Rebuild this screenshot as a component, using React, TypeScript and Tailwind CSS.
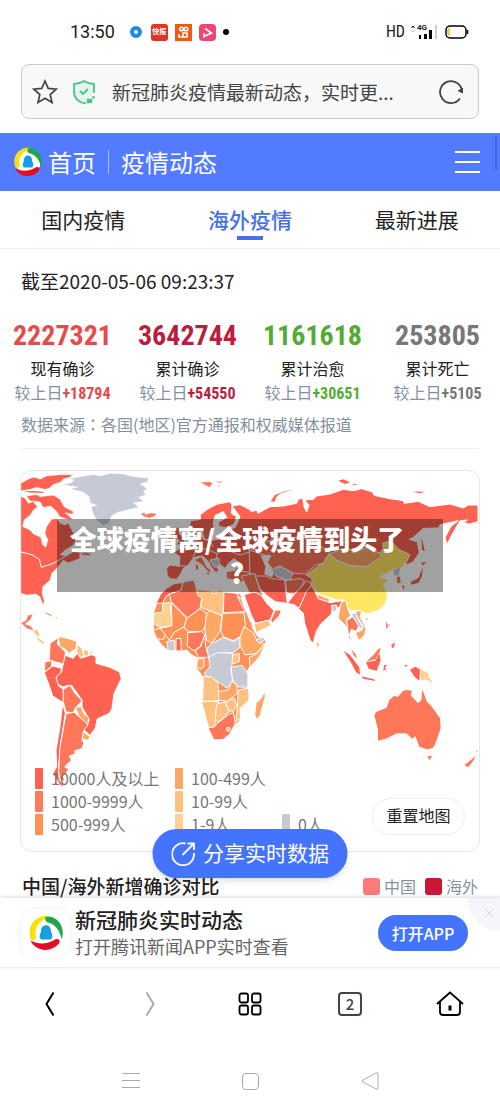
import React, { useState } from 'react';
import { X } from 'lucide-react';

const stats = [
  { value: '2227321', label: '现有确诊', diff: '+18794', color: 'text-[#e64b4b]' },
  { value: '3642744', label: '累计确诊', diff: '+54550', color: 'text-[#b81f3f]' },
  { value: '1161618', label: '累计治愈', diff: '+30651', color: 'text-[#53ab35]' },
  { value: '253805', label: '累计死亡', diff: '+5105', color: 'text-[#777777]' },
];

const legend = [
  { label: '10000人及以上', color: 'bg-[#ff6050]' },
  { label: '100-499人', color: 'bg-[#ffa566]' },
  { label: '', color: '' },
  { label: '1000-9999人', color: 'bg-[#ff7a5a]' },
  { label: '10-99人', color: 'bg-[#ffc080]' },
  { label: '', color: '' },
  { label: '500-999人', color: 'bg-[#ff9056]' },
  { label: '1-9人', color: 'bg-[#ffd193]' },
  { label: '0人', color: 'bg-[#c5cad5]' },
];

const RED = '#ff6250';
const CORAL = '#ff7759';
const ORANGE = '#ff9056';
const AMBER = '#ffa866';
const SAND = '#ffc080';
const PALE = '#ffd193';
const GREY = '#c5cad5';

interface Region {
  fill: string;
  d: string;
}

const northWest: Region[] = [
  { fill: RED, d: 'M33 70L60 55 75 52 90 58 110 48 150 44 187 44 180 52 160 56 152 66 130 73 118 84 105 88 80 82 60 88 33 92ZM38 94L70 92 103 95 100 99 60 98ZM50 108L80 104 90 110 130 106 150 118 162 140 190 155 187 162 165 158 188 178 172 178 150 170 138 152 122 138 100 142 90 125 60 122Z' },
  { fill: RED, d: 'M33 110L45 115 55 130 70 125 82 140 70 150 60 165 42 180 38 200 60 210 70 222 92 232 98 255 108 262 114 240 105 220 110 200 125 178 140 176 150 190 165 195 175 190 185 210 200 235 190 255 165 270 150 285 170 288 190 275 210 278 208 296 175 308 160 300 140 325 125 340 120 360 98 380 96 400 103 425 98 433 90 410 78 402 50 405 33 400Z' },
  { fill: CORAL, d: 'M33 488L48 482 54 466 68 463 62 478 45 492 62 498 72 512 50 505ZM98 454L120 462 131 471 114 464ZM215 279L232 278 243 281 238 287 214 284Z' },
  { fill: SAND, d: 'M70 514L82 508 88 524 84 530ZM78 530L90 538 104 549 99 552 84 541ZM132 472L146 473 139 477ZM152 475L158 479 152 480Z' },
  { fill: GREY, d: 'M158 74L184 68 192 60 180 56 212 50 250 44 274 48 300 40 340 42 370 50 415 54 412 65 390 72 410 85 400 95 408 104 385 112 402 124 370 128 386 142 350 150 320 158 305 168 296 190 278 196 258 178 247 154 244 140 262 136 240 128 238 110 218 95 180 87 204 81Z' },
  { fill: CORAL, d: 'M392 160L405 158 406 164 420 159 438 160 436 168 418 174 402 170ZM570 67L600 65 608 71 598 82 585 75ZM615 65L640 64 630 69ZM622 77L630 76 626 80Z' },
];

const europe: Region[] = [
  { fill: RED, d: 'M540 225L538 200 543 182 572 178 570 165 592 148 620 133 660 125 666 136 664 160 680 170 672 192 650 203 628 200 624 188 650 172 640 155 616 166 610 185 612 198 600 215 596 238 584 240 576 215 558 228Z' },
  { fill: RED, d: 'M666 138L690 134 722 150 722 345 700 350 680 345 662 348 655 335 680 325 690 310 672 296 655 310 646 325 632 316 620 298 610 305 626 330 618 338 604 322 596 305 578 288 560 290 548 296 535 316 520 325 510 345 500 358 482 356 472 348 470 325 480 315 508 318 510 290 492 278 505 268 530 258 545 240 565 240 572 222 580 238 600 242 640 234 652 212 676 202 690 170Z' },
  { fill: RED, d: 'M490 206L508 200 508 220 524 238 524 252 497 256 508 242 494 230ZM472 232L488 222 492 240 476 250ZM558 308L566 320 562 336 556 325ZM584 338L600 336 596 346Z' },
  { fill: CORAL, d: 'M550 300L575 290 590 320 604 332 596 338 576 314ZM648 335L680 330 722 338 722 362 690 366 676 360 650 356Z' },
  { fill: GREY, d: 'M600 300L626 294 630 316 612 322Z' },
];

const africa: Region[] = [
  { fill: ORANGE, d: 'M440 430L470 388 500 368 552 358 562 388 600 392 640 400 690 400 705 430 722 470 728 505 745 532 765 530 768 545 755 580 720 620 704 645 715 670 717 720 690 745 690 780 670 800 660 825 640 838 612 840 600 805 580 740 578 700 578 650 560 625 565 595 545 585 530 570 500 576 475 572 455 555 430 520 430 460Z' },
  { fill: RED, d: 'M438 430L452 402 470 385 495 370 520 368 512 392 478 402 466 412 458 430Z' },
  { fill: CORAL, d: 'M484 425L478 402 512 392 520 366 552 360 562 400 575 415 570 445 532 474Z' },
  { fill: SAND, d: 'M562 388L600 392 612 402 628 390 642 396 638 468 600 452 572 442 576 416 562 404Z' },
  { fill: CORAL, d: 'M642 396L680 400 690 416 682 410 706 455 640 458Z' },
  { fill: PALE, d: 'M430 490L432 460 458 456 458 430 480 428 486 498 448 502Z' },
  { fill: ORANGE, d: 'M450 505L486 497 484 428 530 475 522 500 494 516 478 540 464 524Z' },
  { fill: ORANGE, d: 'M530 475L570 446 590 460 586 500 574 515 538 515 522 504Z' },
  { fill: AMBER, d: 'M590 460L600 452 636 468 630 514 605 550 590 540 584 508Z' },
  { fill: ORANGE, d: 'M638 460L702 458 706 495 690 530 670 542 640 530 632 512Z' },
  { fill: ORANGE, d: 'M430 510L450 505 466 524 460 538 440 536Z' },
  { fill: GREY, d: 'M606 550L640 532 672 545 690 532 690 562 672 577 625 580 596 592 590 566Z' },
  { fill: CORAL, d: 'M533 518L575 515 585 525 570 560 552 572 532 558Z' },
  { fill: CORAL, d: 'M585 522L586 555 596 592 566 592 556 572 572 560Z' },
  { fill: GREY, d: 'M470 545L492 540 496 572 475 572Z' },
  { fill: RED, d: 'M498 536L512 535 514 570 498 574Z' },
  { fill: GREY, d: 'M596 592L622 578 668 580 672 600 662 625 668 665 650 684 625 665 602 658 582 642 600 620Z' },
  { fill: AMBER, d: 'M702 500L730 518 740 540 762 552 740 580 705 585 690 556 690 532Z' },
  { fill: GREY, d: 'M738 540L764 531 764 540 748 550Z' },
  { fill: AMBER, d: 'M768 545L750 588 720 622 718 592 742 580Z' },
  { fill: SAND, d: 'M668 585L688 580 688 605 666 612Z' },
  { fill: GREY, d: 'M663 622L696 616 714 642 713 682 682 680 668 660Z' },
  { fill: AMBER, d: 'M562 598L582 594 582 620 570 628 560 618Z' },
  { fill: SAND, d: 'M580 650L604 650 624 668 626 722 578 724Z' },
  { fill: AMBER, d: 'M626 695L655 690 665 664 680 672 682 700 652 724 626 720Z' },
  { fill: SAND, d: 'M574 724L628 725 620 735 614 800 596 804Z' },
  { fill: SAND, d: 'M620 732L644 726 658 755 624 788 616 780Z' },
  { fill: SAND, d: 'M646 726L672 714 680 735 670 754 656 752Z' },
  { fill: SAND, d: 'M685 690L716 684 717 720 690 745 692 774 678 784 682 740Z' },
  { fill: CORAL, d: 'M594 804L614 800 625 788 655 764 670 758 676 790 660 820 640 838 612 840Z' },
  { fill: AMBER, d: 'M764 695L766 710 756 745 750 768 740 778 734 764 738 730 752 716Z' },
];

const southAmerica: Region[] = [
  { fill: CORAL, d: 'M120 10L145 -7 142 12 152 22 166 35 164 72 144 68 118 60Z' },
  { fill: AMBER, d: 'M145 -5L152 -10 180 -3 200 4 198 26 178 40 166 28 150 20Z' },
  { fill: SAND, d: 'M202 12L216 26 222 50 208 52 200 34ZM220 28L235 32 236 48 222 48Z' },
  { fill: GREY, d: 'M238 30L247 38 241 50Z' },
  { fill: CORAL, d: 'M105 65L126 62 124 80 103 96Z' },
  { fill: RED, d: 'M160 70L166 46 190 55 202 40 212 55 246 44 258 50 258 70 300 82 328 96 334 116 312 160 306 205 298 220 262 236 256 264 240 286 222 270 238 240 216 200 216 180 184 135 158 140 138 130 140 108 155 95Z' },
  { fill: RED, d: 'M103 98L128 78 155 85 152 98 138 112 146 138 160 148 160 188 128 168 116 132Z' },
  { fill: CORAL, d: 'M160 148L180 136 195 160 216 182 196 204 190 218 168 216 160 186Z' },
  { fill: AMBER, d: 'M196 204L212 198 222 222 236 232 234 252 216 246Z' },
  { fill: AMBER, d: 'M218 274L240 290 234 301 217 298Z' },
  { fill: RED, d: 'M158 190L166 220 152 310 146 380 148 420 164 438 152 438 128 402 140 380 138 330 150 260Z' },
  { fill: CORAL, d: 'M168 222L192 216 234 254 220 274 216 300 222 310 215 326 194 332 195 342 178 348 184 360 164 380 176 388 160 410 166 424 150 420 146 396 150 320Z' },
];

const asia: Region[] = [
  { fill: RED, d: 'M-6 160L20 150 24 160 60 140 100 138 140 130 145 118 158 114 162 140 170 156 177 136 164 120 190 118 200 108 240 102 280 88 310 92 335 86 368 96 372 106 420 116 460 122 462 130 505 124 540 140 600 132 640 144 654 135 684 135 684 185 658 192 640 188 652 180 630 182 605 225 590 255 586 232 602 200 625 182 570 194 566 204 520 205 490 232 478 238 502 246 508 278 490 305 470 315 462 296 410 340 300 400 190 370 150 400 0 350Z' },
  { fill: CORAL, d: 'M-6 268L40 250 80 232 160 232 200 250 240 276 224 308 196 316 166 342 130 340 90 318 68 326 50 308 62 290 36 284Z' },
  { fill: '#ffffff', d: 'M34 288L62 286 52 306 70 336 66 350 44 342 48 320Z' },
  { fill: GREY, d: 'M66 334L90 318 128 340 120 362 80 350Z' },
  { fill: CORAL, d: 'M-26 348L14 340 30 392 42 406 0 402Z' },
  { fill: RED, d: 'M16 348L46 348 66 356 104 360 108 400 112 430 76 425 50 406 30 386Z' },
  { fill: RED, d: 'M-18 404L12 396 32 404 52 432 72 452 60 480 16 490 4 466Z' },
  { fill: SAND, d: 'M12 492L54 481 64 496 18 518Z' },
  { fill: CORAL, d: 'M62 480L76 450 94 450 88 468 66 490Z' },
  { fill: CORAL, d: 'M106 362L150 355 164 362 150 385 132 402 110 400Z' },
  { fill: RED, d: 'M112 430L132 404 150 385 170 362 186 372 168 400 156 430 146 444 132 434Z' },
  { fill: RED, d: 'M146 446L158 420 170 392 186 376 200 406 240 428 276 422 270 440 246 450 244 462 212 492 198 515 190 548 180 540 164 490 160 460Z' },
  { fill: AMBER, d: 'M200 402L238 416 238 427 204 416Z' },
  { fill: GREY, d: 'M244 436L260 436 260 452 248 456Z' },
  { fill: AMBER, d: 'M272 430L288 418 294 448 302 466 290 478 296 510 284 494 264 474Z' },
  { fill: CORAL, d: 'M290 482L308 470 328 496 318 514 304 508 298 526 312 550 296 532Z' },
  { fill: GREY, d: 'M304 462L318 458 322 474 338 502 330 506 314 478Z' },
  { fill: AMBER, d: 'M316 454L336 452 330 470 348 506 344 526 326 542 316 518 336 510 340 500 322 472Z' },
  { fill: '#ffe663', d: 'M168 345L200 322 222 308 228 292 242 282 258 300 320 320 395 290 390 278 400 266 398 250 422 242 446 268 480 284 470 305 454 324 430 328 405 344 394 342 392 352 418 360 400 374 412 400 408 430 384 452 350 462 330 452 300 452 285 420 262 420 205 402 185 376 186 355Z' },
  { fill: AMBER, d: 'M240 282L280 264 320 274 350 264 392 280 394 290 350 320 300 316 258 300Z' },
];

const eastIslands: Region[] = [
  { fill: GREY, d: 'M430 330L452 322 444 348 432 344Z' },
  { fill: CORAL, d: 'M440 350L450 350 452 368 442 370Z' },
  { fill: RED, d: 'M482 366L506 354 518 322 516 348 506 368 484 374ZM456 376L464 378 460 389ZM512 308L530 306 520 316ZM514 232L522 262 524 272 516 270Z' },
  { fill: RED, d: 'M62 124L75 105 100 95 136 87 92 100 78 112 74 125ZM265 62L280 58 300 67 285 72ZM305 71L326 73 312 75ZM490 94L525 96 508 100ZM408 484L414 498 409 508ZM416 492L420 496 416 498ZM424 556L434 548 432 562 426 564Z' },
  { fill: AMBER, d: 'M200 545L207 553 203 564ZM348 474L354 476 350 482Z' },
];

const oceania: Region[] = [
  { fill: CORAL, d: 'M375 235L373 226 378 216 410 203 418 180 432 168 444 170 458 154 468 150 486 152 482 166 504 190 514 180 517 148 530 184 544 198 570 235 572 264 556 312 548 324 530 328 508 320 496 288 486 296 470 280 440 280 408 296 384 302 384 268ZM532 348L546 348 539 361ZM643 376L660 362 676 348 670 362 655 381ZM678 334L683 331 682 336Z' },
  { fill: RED, d: 'M280 32L300 45 328 82 330 104 318 96 300 62ZM348 66L376 62 388 40 392 60 380 92 356 86ZM333 109L372 118 376 123 340 116ZM402 75L412 74 405 82 413 96 405 88 400 94ZM462 74L474 76 468 80ZM480 90L495 80 510 88 508 122 495 112ZM182 0L190 0 188 7Z' },
  { fill: CORAL, d: 'M350 64L370 46 384 28 392 24 388 38 376 58ZM304 28L318 44 320 56 310 44ZM424 14L434 8 432 20Z' },
  { fill: PALE, d: 'M512 88L535 100 536 110 550 133 530 118 512 122Z' },
];

const Regions: React.FC<{ items: Region[] }> = ({ items }) => (
  <>
    {items.map((r) => (
      <path key={r.d} d={r.d} fill={r.fill} />
    ))}
  </>
);

const WorldMap: React.FC = () => (
  <svg viewBox="33 33 1374 1002" className="block w-full" role="img" aria-label="全球疫情地图">
    <g stroke="#fff" strokeWidth="3" strokeLinejoin="round">
      <g strokeWidth="1">
        <Regions items={northWest} />
      </g>
      <path d="M33 276L66 284 88 298 94 322 130 310 165 290 176 280" fill="none" />
      <Regions items={europe} />
      <g transform="translate(720 0)">
        <Regions items={asia} />
        <g stroke="none">
          <Regions items={eastIslands} />
        </g>
      </g>
      {/* joins Russia's two halves */}
      <path d="M708 158L728 154V258L708 264Z" fill={RED} stroke="none" />
      <path d="M545 240L560 262 590 268 600 242M560 262L548 296M590 268L620 280 650 270 645 236M620 280L620 298M650 270L690 285 722 275M600 240L610 262M646 212L660 225 700 230M500 318L535 318" fill="none" />
      <Regions items={africa} />
      <circle cx="655" cy="808" r="6" fill={SAND} />
      <path d="M694 412L724 486" strokeWidth="7" />
      <g transform="translate(0 540)">
        <Regions items={southAmerica} />
      </g>
      <g transform="translate(720 540)" stroke="none">
        <Regions items={oceania} />
      </g>
    </g>
  </svg>
);

const NewsLogo: React.FC<{ className: string }> = ({ className }) => (
  <svg viewBox="0 0 36 36" className={className}>
    <circle cx="18" cy="18" r="15" fill="#fff" />
    <path d="M3 24.500C-2 13 6 1 18 1C20 1 20 3 18 3.500C10 7 6 14 8 22C8 25 4 27 3 24.500Z" fill="#fbdf0c" />
    <path d="M19 1.500C30 1 38 13 33.500 24.500C32.500 16 27 9 20 7.500C17 7 16 2 19 1.500Z" fill="#1fa64a" />
    <path d="M2.500 25.500C11 30 19 29 27 24.500C31 23 33 26 31 28.500C23 38 8 37 2.500 25.500Z" fill="#e60b20" />
    <path d="M13 24.500Q12 24.500 12.500 23L11.500 22.500Q11.500 19 13 17C12.500 8 23.500 8 23 17Q24.500 19 24.500 22.500L23.500 23Q24 24.500 23 24.500Z" fill="#159fe0" />
  </svg>
);

const StatusBar: React.FC = () => (
  <div className="flex h-16 items-center justify-between pl-[70px] pr-[31px] font-['Roboto','Noto_Sans_CJK_SC',sans-serif]">
    <div className="flex items-center gap-[7px]">
      <span className="mr-2 text-[18px] leading-6">13:50</span>
      <svg viewBox="0 0 12 12" className="mr-[2px] size-3">
        <circle cx="6" cy="6" r="4" fill="#fff" stroke="#2388e0" strokeWidth="4" />
      </svg>
      <span className="flex size-[17px] flex-col items-center justify-center rounded-[3px] bg-[#df3524] text-[7px] font-bold leading-[9px] text-white">快报</span>
      <svg viewBox="0 0 17 17" className="size-[17px]" fill="none" stroke="#fff" strokeWidth="1.6">
        <path d="M0 0H17V17H0Z" fill="#ef5a13" stroke="none" />
        <circle cx="6.500" cy="5" r="1.800" />
        <circle cx="11" cy="5" r="1.800" />
        <path d="M4 10V13H7M8 9H12V13H8Z" />
      </svg>
      <svg viewBox="0 0 17 17" className="size-[17px]">
        <rect width="17" height="17" rx="4" fill="#ec4772" />
        <path d="M6 4.500L12.500 9 5 12.500V9" fill="none" stroke="#fff" strokeWidth="1.700" />
      </svg>
      <span className="size-[6px] rounded-full bg-black" />
    </div>
    <div className="flex items-center gap-[6px]">
      <span className="font-['Roboto_Condensed','Roboto',sans-serif] text-[16px] leading-6">HD</span>
      <div className="flex">
        <svg viewBox="0 0 4 8" className="h-2 w-1" fill="none">
          <path d="M0.500 3L2 1L3.500 3" stroke="#000" />
          <path d="M0.500 5L2 7L3.500 5" stroke="#bbb" />
        </svg>
        <span className="-mt-[2px] ml-[2px] text-[8px] font-bold leading-[10px]">4G</span>
        <svg viewBox="0 0 18 14" className="-ml-2 h-[14px] w-[18px]">
          <path d="M0 10H2V14H0ZM5 9H8V14H5ZM10 5H13V14H10Z" />
          <path d="M16 0H18V14H16Z" fill="#ccc" />
        </svg>
      </div>
      <svg viewBox="0 0 24 14" className="ml-[2px] h-[14px] w-6">
        <rect x="1" y="1" width="20" height="12" rx="4" fill="#fff" stroke="#000" strokeWidth="1.500" />
        <path d="M5 2.500V11.500C1 11.500 1 2.500 5 2.500Z" fill="#f7cb4d" />
        <path d="M22.500 5V9" stroke="#000" strokeWidth="1.500" />
      </svg>
    </div>
  </div>
);

const AddressBar: React.FC = () => (
  <div className="mx-[21px] mb-[14px] flex h-[55px] items-center rounded-lg border border-[#ccc] bg-[#f8f8f8] px-[10px] text-[#444]">
    <button aria-label="收藏">
      <svg viewBox="0 0 26 26" className="size-[26px]" fill="none" stroke="currentColor" strokeWidth="1.700">
        <path d="M13 2L16.200 9.400 24.300 10.200 18.200 15.500 20 23.500 13 19.300 6 23.500 7.800 15.500 1.700 10.200 9.800 9.400Z" />
      </svg>
    </button>
    <svg viewBox="0 0 24 26" className="ml-[14px] h-[26px] w-6" fill="none" stroke="#4ac38a" strokeWidth="1.800">
      <path d="M14 23.500L12 24.500C5 22 2 19 2 12V5C6 5 9 4 12 2C15 4 18 5 22 5V14" fill="#e3f6ed" />
      <path d="M8 12L11 15 16 10" />
      <path d="M15.500 20.500H19.500V23.500H15.500ZM21 20V18H23" fill="#4ac38a" strokeWidth="1.400" />
    </svg>
    <span className="ml-4 min-w-0 flex-1 truncate text-[19px] leading-7">新冠肺炎疫情最新动态，实时更...</span>
    <button aria-label="刷新">
      <svg viewBox="0 0 26 26" className="mr-1 size-[26px]" fill="none" stroke="currentColor" strokeWidth="1.800">
        <path d="M22 19.500A11 11 0 1 1 24 12" />
        <path d="M20 11.500L24.500 14 24.500 9" fill="currentColor" strokeWidth="1" />
      </svg>
    </button>
  </div>
);

const App: React.FC = () => {
  const [tab, setTab] = useState('海外疫情');

  return (
    <div className="min-h-screen bg-white font-['Noto_Sans_CJK_SC',sans-serif] text-[#222]">
      <StatusBar />
      <AddressBar />

      {/* Site header */}
      <header className="relative flex h-[58px] items-center bg-[#537bff] pl-[13px] pr-5 text-2xl text-white">
        <NewsLogo className="size-[30px]" />
        <a href="#home" className="ml-[5px]">首页</a>
        <span className="mx-3 h-6 w-px bg-white/50" />
        <a href="#news" className="flex-1">疫情动态</a>
        <button aria-label="菜单" className="flex flex-col gap-2">
          <span className="h-[2px] w-[25px] bg-white" />
          <span className="h-[2px] w-[25px] bg-white" />
          <span className="h-[2px] w-[25px] bg-white" />
        </button>
        <span className="absolute right-[3px] top-[3px] h-[34px] w-[2px] bg-[#4567d8]" />
      </header>

      <nav className="flex h-[58px] border-b border-[#f0f0f0]">
        {['国内疫情', '海外疫情', '最新进展'].map((name) => (
          <button
            key={name}
            onClick={() => setTab(name)}
            className={`relative flex-1 text-[21px] ${tab === name ? 'font-medium text-[#4770e8]' : ''}`}
          >
            {name}
            {tab === name && <span className="absolute bottom-2 left-1/2 h-1 w-[26px] -translate-x-1/2 bg-[#4770e8]" />}
          </button>
        ))}
      </nav>

      <main>
        <p className="px-[21px] pt-[18px] text-[19px] leading-7">截至2020-05-06 09:23:37</p>

        <section className="mt-[25px] flex">
          {stats.map((s) => (
            <div key={s.label} className="flex flex-1 flex-col items-center">
              <strong className={`font-['Roboto_Condensed','Noto_Sans_CJK_SC',sans-serif] text-[28px] leading-8 ${s.color}`}>{s.value}</strong>
              <span className="mt-1 text-[16px] leading-6">{s.label}</span>
              <span className="flex h-6 items-baseline text-[16px] leading-6 text-[#8490a0]">
                较上日
                <b className={`font-['Roboto_Condensed','Roboto',sans-serif] text-[16px] ${s.color}`}>{s.diff}</b>
              </span>
            </div>
          ))}
        </section>

        <p className="mx-[21px] border-b border-[#f0f0f0] pb-3 pt-2 text-[16px] leading-6 text-[#8490a0]">
          数据来源<span className="font-['Noto_Sans_CJK_TC',sans-serif]" lang="zh-TW">：</span>各国(地区)官方通报和权威媒体报道
        </p>

        {/* Map card */}
        <section className="relative mx-5 mt-[21px] overflow-hidden rounded-xl border border-[#e8e8e8] pb-[46px]">
          <WorldMap />
          <div className="absolute bottom-[15px] left-[14px] grid grid-cols-[140px_107px_80px] text-[16px] leading-[23px] text-[#777]">
            {legend.map((l, i) => (
              <div key={i} className="flex items-center gap-2">
                {l.label && <span className={`h-[21px] w-2 rounded-[1px] ${l.color}`} />}
                {l.label}
              </div>
            ))}
          </div>
          <button className="absolute bottom-4 right-[14px] h-[37px] w-[93px] rounded-full border border-[#eee] bg-white pb-1 text-[16px]">
            重置地图
          </button>
          <h1 className="absolute inset-x-9 top-12 bg-black/[.37] pb-[2px] pr-[26px] pt-[3px] text-center text-[27px] font-black leading-[34px] text-white">
            全球疫情离/全球疫情到头了<br />?
          </h1>
        </section>

        <section className="relative flex items-center justify-between px-[22px] pt-[22px]">
          <h2 className="text-[19px] font-medium leading-6">中国/海外新增确诊对比</h2>
          <div className="flex items-center text-[16px] leading-6 text-[#8490a0]">
            <span className="mr-1 size-[17px] rounded-[3px] bg-[#ff7b7b]" />
            中国
            <span className="ml-[9px] mr-1 size-[17px] rounded-[3px] bg-[#cb1736]" />
            海外
          </div>
          <button className="absolute -top-[23px] left-1/2 flex h-[49px] w-[195px] -translate-x-1/2 items-center justify-center gap-2 rounded-full bg-[#4373ff] text-[21px] text-white shadow-md">
            <svg viewBox="0 0 24 24" className="size-6" fill="none" stroke="currentColor" strokeWidth="1.800">
              <path d="M14 1.500A11 11 0 1 0 22.500 11M11 13L22 2M16 1.500H22.500V8" />
            </svg>
            <span className="pb-[2px]">分享实时数据</span>
          </button>
        </section>
      </main>

      {/* App download banner */}
      <aside className="relative flex h-[70px] items-center overflow-hidden border-b border-[#eee] bg-white pl-[22px] pr-8 shadow-[0_-1px_4px_rgba(90,100,150,0.25)]">
        <div className="flex size-12 items-center justify-center rounded-xl bg-white shadow-[0_0_6px_rgba(90,120,200,0.12)]">
          <NewsLogo className="size-[36px]" />
        </div>
        <div className="ml-[5px] flex-1">
          <p className="text-[21px] font-medium leading-7">新冠肺炎实时动态</p>
          <p className="text-[18px] leading-[27px] text-[#666]">打开腾讯新闻APP实时查看</p>
        </div>
        <button className="h-9 w-[90px] rounded-full bg-[#4373ff] text-[16px] font-medium text-white">打开APP</button>
        <button aria-label="关闭" className="absolute -right-[33px] -top-[33px] flex size-[66px] items-end rounded-full bg-[#f5f6fc] pb-[10px] pl-[14px] text-[#ccc]">
          <X size={16} strokeWidth={1} />
        </button>
      </aside>

      {/* Browser toolbar */}
      <nav className="grid h-[72px] grid-cols-5 place-items-center text-black">
        <button aria-label="后退">
          <svg viewBox="0 0 10 26" className="h-[26px] w-[10px]" fill="none" stroke="currentColor" strokeWidth="2"><path d="M8.500 1.500L1.500 13 8.500 24.500" /></svg>
        </button>
        <button aria-label="前进" className="text-[#aaa]">
          <svg viewBox="0 0 10 26" className="h-[26px] w-[10px]" fill="none" stroke="currentColor" strokeWidth="2"><path d="M1.500 1.500L8.500 13 1.500 24.500" /></svg>
        </button>
        <button aria-label="更多">
          <svg viewBox="0 0 24 24" className="size-6" fill="none" stroke="currentColor" strokeWidth="1.800">
            <rect x="1.500" y="1.500" width="8.500" height="9" rx="2" />
            <rect x="14" y="1.500" width="8.500" height="9" rx="2" />
            <rect x="1.500" y="13.500" width="8.500" height="9" rx="2" />
            <rect x="14" y="13.500" width="8.500" height="9" rx="2" />
          </svg>
        </button>
        <button aria-label="标签页" className="size-6 rounded-[4px] border-2 border-[#444] text-[15px] font-medium leading-5 text-[#444]">2</button>
        <button aria-label="主页">
          <svg viewBox="0 0 28 26" className="h-[26px] w-7" fill="none" stroke="currentColor" strokeWidth="1.800">
            <path d="M1 13L14 1.500 27 13M4 11V21Q4 24 7 24H21Q24 24 24 21V11" />
            <path d="M12.500 14.500H15.500V19.500H12.500Z" fill="currentColor" stroke="none" />
          </svg>
        </button>
      </nav>

      {/* System navigation */}
      <nav className="flex h-[72px] items-center justify-center gap-[102px] pt-[10px] text-[#aaa]">
        <button aria-label="任务">
          <svg viewBox="0 0 18 18" className="size-[18px]" stroke="currentColor"><path d="M0 1.500H18M0 8.500H18M0 15.500H18" /></svg>
        </button>
        <button aria-label="桌面" className="size-[17px] rounded-[4px] border border-current" />
        <button aria-label="返回">
          <svg viewBox="0 0 18 20" className="h-5 w-[18px]" fill="none" stroke="currentColor" strokeLinejoin="round"><path d="M2 9Q0 10 2 11L15 18Q17 19 17 17V3Q17 1 15 2Z" /></svg>
        </button>
      </nav>
    </div>
  );
};

export default App;
